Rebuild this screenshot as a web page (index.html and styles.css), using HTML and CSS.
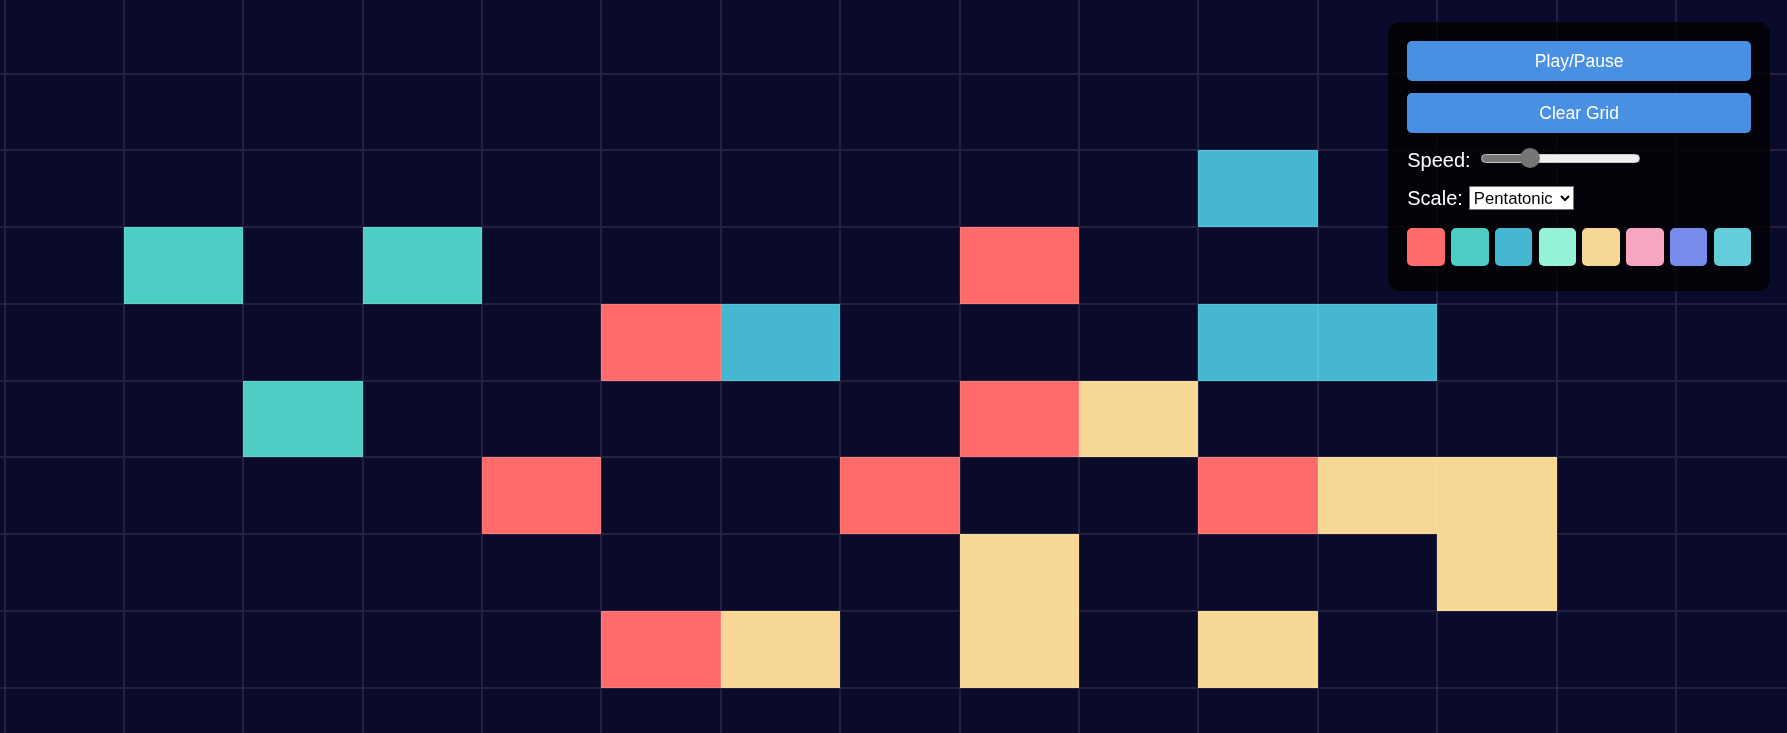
FILE: index.html
```html
<!DOCTYPE html>
<html lang="en">
<head>
    <meta charset="UTF-8">
    <meta name="viewport" content="width=device-width, initial-scale=1.0">
    <title>Grid Sequencer</title>
    <link rel="stylesheet" href="styles.css">
</head>
<body>
    <div id="grid" class="grid"></div>

    <div class="controls">
        <button id="playBtn" class="btn">Play/Pause</button>
        <button id="clearBtn" class="btn">Clear Grid</button>

        <div class="row">
            <label for="speed">Speed:</label>
            <input type="range" id="speed" class="speed" min="100" max="1000" value="350">
        </div>

        <div class="row">
            <label for="scale">Scale:</label>
            <select id="scale" class="scale-select">
                <option>Pentatonic</option>
                <option>Major</option>
                <option>Minor</option>
                <option>Blues</option>
            </select>
        </div>

        <div class="swatches">
            <div class="swatch c-red"></div>
            <div class="swatch c-teal"></div>
            <div class="swatch c-blue"></div>
            <div class="swatch c-mint"></div>
            <div class="swatch c-yellow"></div>
            <div class="swatch c-pink"></div>
            <div class="swatch c-indigo"></div>
            <div class="swatch c-cyan"></div>
        </div>
    </div>

    <script>
        const COLS = 16;
        const ROWS = 10;

        // active notes: "col,row" -> colour
        const notes = {
            '11,2': 'blue',
            '2,3': 'teal', '4,3': 'teal', '9,3': 'red',
            '6,4': 'red', '7,4': 'blue', '11,4': 'blue', '12,4': 'blue',
            '3,5': 'teal', '9,5': 'red', '10,5': 'yellow',
            '5,6': 'red', '8,6': 'red', '11,6': 'red', '12,6': 'yellow', '13,6': 'yellow',
            '9,7': 'yellow', '13,7': 'yellow',
            '6,8': 'red', '7,8': 'yellow', '9,8': 'yellow', '11,8': 'yellow'
        };

        const grid = document.getElementById('grid');
        for (let r = 0; r < ROWS; r++) {
            for (let c = 0; c < COLS; c++) {
                const cell = document.createElement('div');
                cell.className = 'cell';
                const color = notes[c + ',' + r];
                if (color) cell.classList.add('c-' + color);
                grid.appendChild(cell);
            }
        }

        document.getElementById('clearBtn').addEventListener('click', function () {
            grid.querySelectorAll('.cell').forEach(cell => {
                cell.className = 'cell';
            });
        });
    </script>
</body>
</html>
```

FILE: styles.css
```css
body {
    margin: 0;
    overflow: hidden;
    background-color: #0a0a2a;
    font-family: 'Liberation Sans', Arial, sans-serif;
}

.grid {
    display: grid;
    grid-template-columns: repeat(16, 119.4px);
    grid-template-rows: repeat(10, 76.8px);
    margin: -3.3px 0 0 -114.9px;
}

.cell {
    box-shadow: inset 0 0 0 1px rgba(255, 255, 255, 0.1);
}

.controls {
    position: fixed;
    top: 22px;
    right: 17px;
    width: 343.75px;
    padding: 19px 19px 25px;
    background-color: rgba(0, 0, 0, 0.8);
    border-radius: 12px;
    color: white;
}

.btn {
    display: block;
    width: 100%;
    height: 40px;
    margin-bottom: 12px;
    background-color: #4a90e2;
    color: white;
    border: none;
    border-radius: 5px;
    font-family: 'Liberation Sans', Arial, sans-serif;
    font-size: 17.5px;
    cursor: pointer;
}

.btn:hover {
    background-color: #3d7fcc;
}

.row {
    display: flex;
    align-items: center;
    gap: 6px;
    height: 24px;
    margin-top: 15px;
    font-size: 20px;
}

.row + .row {
    margin-top: 14px;
}

.speed {
    -webkit-appearance: none;
    appearance: none;
    width: 159px;
    height: 20px;
    margin: 0 0 4px 4px;
    background: transparent;
}

.speed::-webkit-slider-runnable-track {
    height: 9px;
    border-radius: 5px;
    box-sizing: border-box;
    border: 1px solid #c8c8c8;
    background: linear-gradient(to right, #767676 0, #767676 30%, #efefef 30%);
}

.speed::-webkit-slider-thumb {
    -webkit-appearance: none;
    width: 20px;
    height: 20px;
    margin-top: -6.5px;
    border-radius: 50%;
    background-color: #767676;
    border: none;
}

.scale-select {
    width: 105px;
    height: 24px;
    font-family: 'Liberation Sans', Arial, sans-serif;
    font-size: 16.7px;
    color: black;
    background-color: white;
}

.swatches {
    display: grid;
    grid-template-columns: repeat(8, 1fr);
    gap: 6.25px;
    margin-top: 18px;
}

.swatch {
    aspect-ratio: 1;
    border-radius: 5px;
    cursor: pointer;
}

.c-red { background-color: #ff6b6b; }
.c-teal { background-color: #4ecdc4; }
.c-blue { background-color: #45b7d1; }
.c-mint { background-color: #96f2d7; }
.c-yellow { background-color: #f7d794; }
.c-pink { background-color: #f8a5c2; }
.c-indigo { background-color: #778beb; }
.c-cyan { background-color: #63cdda; }
```
